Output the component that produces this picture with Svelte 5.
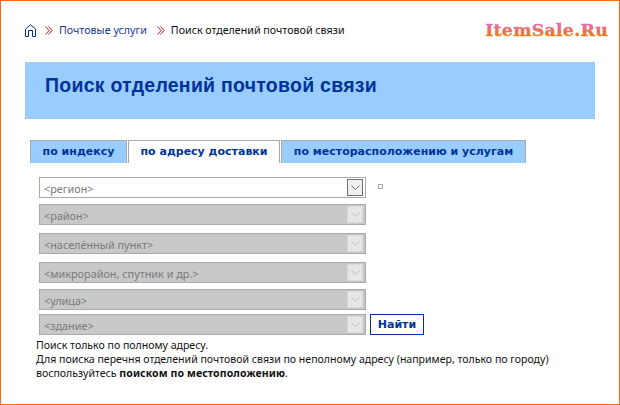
<script>
  const fields = [
    { label: '<регион>', active: true },
    { label: '<район>' },
    { label: '<населённый пункт>' },
    { label: '<микрорайон, спутник и др.>' },
    { label: '<улица>' },
    { label: '<здание>' }
  ];
</script>

<div class="page">
  <header class="top">
    <nav class="crumbs">
      <svg class="home" width="11" height="13" viewBox="0 0 11 13" aria-hidden="true">
        <path d="M0.5 12.5V5L5.5 0.8L10.5 5V12.5H7.5V6.5H3.5V12.5Z" fill="none" stroke="#003399" stroke-width="1"/>
      </svg>
      <svg class="sep" width="8" height="9" viewBox="0 0 8 9" aria-hidden="true">
        <path d="M0.5 0.5L4 4.5L0.5 8.5M3.5 0.5L7 4.5L3.5 8.5" fill="none" stroke="#e8101a" stroke-width="1"/>
      </svg>
      <span class="link">Почтовые услуги</span>
      <svg class="sep" width="8" height="9" viewBox="0 0 8 9" aria-hidden="true">
        <path d="M0.5 0.5L4 4.5L0.5 8.5M3.5 0.5L7 4.5L3.5 8.5" fill="none" stroke="#e8101a" stroke-width="1"/>
      </svg>
      <span class="here">Поиск отделений почтовой связи</span>
    </nav>
    <div class="logo">ItemSale.Ru</div>
  </header>

  <div class="banner"><h1>Поиск отделений почтовой связи</h1></div>

  <div class="tabs">
    <div class="tab t1">по индексу</div>
    <div class="tab t2 on">по адресу доставки</div>
    <div class="tab t3">по месторасположению и услугам</div>
  </div>

  <div class="form">
    {#each fields as f, i}
      <div class="row r{i}">
        <div class="sel" class:active={f.active}>
          <span>{f.label}</span>
          <i class="btn">
            <svg width="9" height="6" viewBox="0 0 9 6"><path d="M0.5 0.5L4.5 4.5L8.5 0.5" fill="none" stroke="currentColor" stroke-width="1"/></svg>
          </i>
        </div>
        {#if i === 0}<b class="dot"></b>{/if}
        {#if i === 5}<button class="find">Найти</button>{/if}
      </div>
    {/each}
  </div>

  <div class="note">
    <p>Поиск только по полному адресу.</p>
    <p>Для поиска перечня отделений почтовой связи по неполному адресу (например, только по городу)<br>воспользуйтесь <strong>поиском по местоположению</strong>.</p>
  </div>
</div>

<style>
  :global(body) { margin: 0; background: #fff; }
  .page {
    width: 620px; height: 405px; box-sizing: border-box;
    border: 1px solid #ff6a0d; overflow: hidden;
    font-family: "Noto Sans", Tahoma, sans-serif; font-size: 10.55px; color: #111;
    padding: 0 24px;
  }
  .top { display: flex; justify-content: space-between; align-items: center; height: 61px; box-sizing: border-box; padding-bottom: 3px; }
  .crumbs { display: flex; align-items: center; font-size: 10.7px; }
  .home { margin-right: 9px; }
  .sep { margin-right: 6px; }
  .link { color: #1a3a99; margin-right: 10px; }
  .here { color: #111; }
  .logo {
    font-family: "DejaVu Serif", serif; font-weight: 700; font-size: 17.3px; letter-spacing: 0.3px;
    margin-right: -13px;
    background: linear-gradient(#e86aa8 25%, #ee7a10 80%);
    -webkit-background-clip: text; background-clip: text; color: transparent;
    -webkit-text-stroke: 0.5px transparent;
  }
  .banner { width: 570px; height: 57px; background: #99ccff; box-sizing: border-box; padding: 12px 20px 0; }
  h1 { margin: 0; font-family: "Liberation Sans", Arial, sans-serif; font-size: 19.5px; line-height: 22px; font-weight: 700; color: #003399; letter-spacing: 0.25px; }
  .tabs { display: flex; gap: 1px; margin: 21px 0 0 5px; height: 23px; }
  .tab {
    box-sizing: border-box; height: 23px; border: 1px solid #aaa; border-bottom: 0; background: #99ccff;
    color: #003399; font: 700 11px/22px "DejaVu Sans", Verdana, sans-serif; text-align: center;
  }
  .t1 { width: 97px; } .t2 { width: 152px; background: #fff; } .t3 { width: 245px; }
  .form { margin: 14px 0 0 14px; }
  .row { display: flex; align-items: center; height: 21px; }
  .r1 { margin-top: 6px; } .r2 { margin-top: 8px; } .r3 { margin-top: 8px; } .r4 { margin-top: 6px; } .r5 { margin-top: 4px; }
  .sel {
    box-sizing: border-box; width: 327px; height: 21px; border: 1px solid #aaa; background: #c8c8c8;
    display: flex; align-items: center; justify-content: space-between; padding: 0 2px 0 4px; color: #7a7a7a;
    font-size: 10.85px;
  }
  .sel span { padding-top: 1px; }
  .sel.active { background: #fff; }
  .btn {
    box-sizing: border-box; width: 16px; height: 17px; display: flex; align-items: center; justify-content: center;
    background: #e6e6e6; color: #b8b8b8; border: 1px solid #d8d8d8;
  }
  .active .btn { background: #f0f0f0; border-color: #707070; color: #666; }
  .dot { width: 3px; height: 3px; border: 1px solid #aaa; margin: -3px 0 0 12px; }
  .find {
    box-sizing: border-box; width: 54px; height: 21px; margin-left: 4px; padding: 0; background: #fff; border: 1px solid #003399;
    color: #003399; font: 700 11px "DejaVu Sans", Verdana, sans-serif;
  }
  .note { margin: 3px 0 0 11px; line-height: 14px; }
  .note p { margin: 0; }
  .note strong { font-weight: 700; letter-spacing: 0.1px; }
</style>
